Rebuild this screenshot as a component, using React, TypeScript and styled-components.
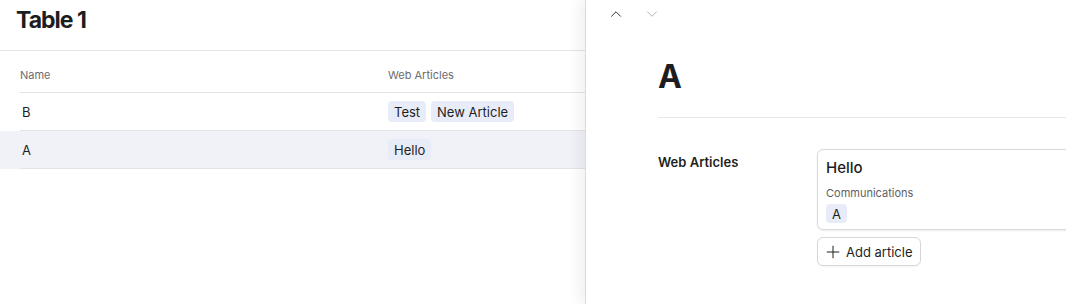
import React from 'react';
import styled, { createGlobalStyle } from 'styled-components';
import { ChevronUp, ChevronDown, Plus } from 'lucide-react';

const GlobalStyle = createGlobalStyle`
  html, body {
    margin: 0;
    padding: 0;
    background: #fff;
  }

  body {
    font-family: Inter, "Noto Sans", "Liberation Sans", sans-serif;
    color: #1f1f21;
    -webkit-font-smoothing: antialiased;
  }
`;

const Page = styled.div`
  position: relative;
  width: 1066px;
  height: 304px;
  overflow: hidden;
  background: #fff;
`;

const Main = styled.main`
  display: flex;
  flex-direction: column;
`;

const Header = styled.header`
  height: 42px;
  padding: 8px 16px 0;
  border-bottom: 1px solid #e4e4e6;
`;

const Title = styled.h1`
  margin: 0;
  font-size: 23px;
  line-height: 24px;
  font-weight: 700;
  letter-spacing: -1px;
  color: #1d1d1f;
`;

const Table = styled.div`
  display: flex;
  flex-direction: column;
`;

const Row = styled.div<{ $selected?: boolean }>`
  display: grid;
  grid-template-columns: 368px 1fr;
  padding-left: 20px;
  background: ${({ $selected }) => ($selected ? '#f1f2f7' : 'transparent')};
`;

const HeadCell = styled.div`
  height: 42px;
  padding-top: 17px;
  box-sizing: border-box;
  font-size: 11px;
  line-height: 14px;
  color: #6b6b70;
  border-bottom: 1px solid #e4e4e6;
`;

const Cell = styled.div<{ $first?: boolean }>`
  height: 38px;
  box-sizing: border-box;
  display: flex;
  align-items: center;
  gap: 5px;
  padding-left: ${({ $first }) => ($first ? '2px' : '0')};
  font-size: 13px;
  color: #1f1f21;
  border-bottom: 1px solid #e4e4e6;
`;

const Tag = styled.span<{ $small?: boolean }>`
  display: inline-flex;
  align-items: center;
  height: ${({ $small }) => ($small ? '19px' : '21px')};
  padding: 0 6px;
  border-radius: 4px;
  background: #e8ecf8;
  font-size: 13px;
  color: #1f1f21;
`;

const Drawer = styled.aside`
  position: absolute;
  top: 0;
  left: 585px;
  width: 520px;
  height: 100%;
  background: #fff;
  border-left: 1px solid #dcdcdf;
  box-shadow: -6px 0 12px rgba(0, 0, 0, 0.06);
`;

const Nav = styled.nav`
  display: flex;
  gap: 8px;
  padding: 0 16px;
`;

const NavButton = styled.button<{ $disabled?: boolean }>`
  width: 28px;
  height: 28px;
  display: flex;
  align-items: center;
  justify-content: center;
  padding: 0;
  border: none;
  background: none;
  color: ${({ $disabled }) => ($disabled ? '#a6a6ab' : '#2a2a2d')};
`;

const DrawerBody = styled.div`
  padding-left: 72px;
`;

const RecordTitle = styled.h2`
  margin: 29px 0 0;
  padding-bottom: 20px;
  border-bottom: 1px solid #e8e8ea;
  font-size: 32px;
  line-height: 40px;
  font-weight: 700;
  color: #1d1d1f;
`;

const Field = styled.section`
  display: grid;
  grid-template-columns: 159px 1fr;
  padding-top: 31px;
`;

const FieldLabel = styled.div`
  padding-top: 4px;
  font-size: 13px;
  line-height: 18px;
  font-weight: 600;
  color: #1f1f21;
`;

const FieldValue = styled.div`
  display: flex;
  flex-direction: column;
  align-items: flex-start;
  gap: 7px;
`;

const Card = styled.div`
  width: 320px;
  padding: 8px 8px 6px;
  border: 1px solid #d9d9dc;
  border-radius: 6px;
  box-shadow: 0 1px 2px rgba(0, 0, 0, 0.08);
  display: flex;
  flex-direction: column;
  align-items: flex-start;
`;

const CardTitle = styled.div`
  font-size: 15px;
  line-height: 20px;
  font-weight: 500;
  color: #1d1d1f;
`;

const CardMeta = styled.div`
  margin: 8px 0 4px;
  font-size: 11px;
  line-height: 14px;
  color: #5f5f64;
`;

const AddButton = styled.button`
  display: inline-flex;
  align-items: center;
  gap: 3px;
  height: 29px;
  padding: 0 7px 0 5px;
  border: 1px solid #d6d6d9;
  border-radius: 6px;
  background: #fff;
  box-shadow: 0 1px 1px rgba(0, 0, 0, 0.04);
  font-family: inherit;
  font-size: 13px;
  color: #1f1f21;
`;

const rows = [
  { name: 'B', articles: ['Test', 'New Article'] },
  { name: 'A', articles: ['Hello'], selected: true },
];

export default function App() {
  return (
    <Page>
      <GlobalStyle />
      <Main>
        <Header>
          <Title>Table 1</Title>
        </Header>
        <Table>
          <Row>
            <HeadCell>Name</HeadCell>
            <HeadCell>Web Articles</HeadCell>
          </Row>
          {rows.map((row) => (
            <Row key={row.name} $selected={row.selected}>
              <Cell $first>{row.name}</Cell>
              <Cell>
                {row.articles.map((a) => (
                  <Tag key={a}>{a}</Tag>
                ))}
              </Cell>
            </Row>
          ))}
        </Table>
      </Main>

      <Drawer>
        <Nav>
          <NavButton>
            <ChevronUp size={18} strokeWidth={1.3} />
          </NavButton>
          <NavButton $disabled>
            <ChevronDown size={18} strokeWidth={1.1} />
          </NavButton>
        </Nav>
        <DrawerBody>
          <RecordTitle>A</RecordTitle>
          <Field>
            <FieldLabel>Web Articles</FieldLabel>
            <FieldValue>
              <Card>
                <CardTitle>Hello</CardTitle>
                <CardMeta>Communications</CardMeta>
                <Tag $small>A</Tag>
              </Card>
              <AddButton>
                <Plus size={20} strokeWidth={1.2} />
                Add article
              </AddButton>
            </FieldValue>
          </Field>
        </DrawerBody>
      </Drawer>
    </Page>
  );
}
